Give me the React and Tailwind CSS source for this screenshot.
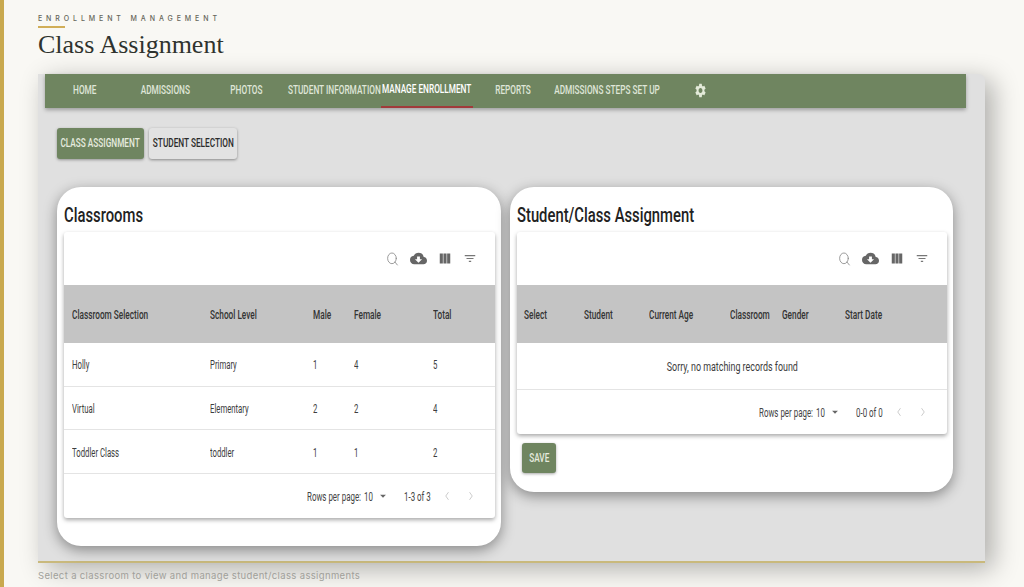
import React from "react";
import { MdCloudDownload, MdViewColumn, MdFilterList, MdSettings, MdArrowDropDown } from "react-icons/md";
import { Search, ChevronLeft, ChevronRight } from "lucide-react";

const roboto = "font-['Roboto',sans-serif]";
const navText = "inline-block whitespace-nowrap text-[12.5px] font-medium scale-x-[0.66]";
const headText = "inline-block whitespace-nowrap origin-left text-[12.5px] font-medium text-[#333] scale-x-[0.66]";
const cellText = "inline-block whitespace-nowrap origin-left text-[12.5px] text-[#3d3d3d] scale-x-[0.62]";
const footText = "inline-block whitespace-nowrap origin-left text-[12px] text-[#444] scale-x-[0.66]";

function Toolbar() {
  return (
    <div className="h-[53px] flex items-center justify-end pr-[18px] gap-[11px] pt-[0px]">
      <Search width={13} height={16} strokeWidth={1.4} color="#8a8a8a" preserveAspectRatio="none" />
      <MdCloudDownload size={17} color="#666" preserveAspectRatio="none" />
      <MdViewColumn size={15} color="#666" preserveAspectRatio="none" className="w-[14px] h-[17px]" />
      <MdFilterList size={15} color="#777" className="w-[14px] h-[15px] ml-[0px]" />
    </div>
  );
}

function Pager({ range }) {
  return (
    <div className="h-[44px] flex items-center justify-end pr-[19px]">
      <span className="w-[57px]"><span className={footText}>Rows per page:</span></span>
      <span className="w-[12px]"><span className={footText}>10</span></span>
      <MdArrowDropDown size={14} color="#666" className="mr-[14px]" />
      <span className="w-[38px]"><span className={footText}>{range}</span></span>
      <ChevronLeft width={10} height={14} strokeWidth={1.2} color="#aaa" preserveAspectRatio="none" />
      <ChevronRight width={10} height={14} strokeWidth={1.2} color="#aaa" preserveAspectRatio="none" className="ml-[14px]" />
    </div>
  );
}

const classrooms = [
  ["Holly", "Primary", "1", "4", "5"],
  ["Virtual", "Elementary", "2", "2", "4"],
  ["Toddler Class", "toddler", "1", "1", "2"],
];

const tabs = [
  ["HOME", "w-[80px]"],
  ["ADMISSIONS", "w-[80px]"],
  ["PHOTOS", "w-[82px]"],
  ["STUDENT INFORMATION", "w-[94px]"],
];

export default function App() {
  return (
    <div className={`h-[587px] overflow-hidden bg-[#f9f8f4] border-l-4 border-[#c9a94f] pl-[34px] flex flex-col ${roboto}`}>
      <header className="h-[74px] pt-[15px]">
        <p className="font-['Inter',sans-serif] text-[7px] leading-[8px] tracking-[3.9px] font-medium text-[#66665a] whitespace-nowrap">ENROLLMENT MANAGEMENT</p>
        <div className="w-[27px] h-[2px] bg-[#d1ae58] mt-[3px]"></div>
        <h1 className="font-['Liberation_Serif',serif] text-[26px] leading-[30px] text-[#2f332e] mt-[2px] whitespace-nowrap">Class Assignment</h1>
      </header>

      <main className="w-[947px] h-[489px] shrink-0 bg-[#e0e0e0] rounded-tr-[6px] border-b-2 border-[#c9b97c] shadow-[8px_6px_26px_rgba(0,0,0,0.3)] pl-[7px]">
        <nav className="w-[921px] h-[34px] bg-[#6f8560] flex shadow-[0_2px_4px_rgba(0,0,0,0.3)] text-[#dfe6d8]">
          {tabs.map(([t, w]) => (
            <div key={t} className={`${w} flex items-center justify-center pb-[2px]`}><span className={navText}>{t}</span></div>
          ))}
          <div className="w-[92px] flex items-center justify-center pb-[2px] border-b-2 border-[#a13a3a] text-white"><span className={navText}>MANAGE ENROLLMENT</span></div>
          <div className="w-[80px] flex items-center justify-center pb-[2px]"><span className={navText}>REPORTS</span></div>
          <div className="w-[108px] flex items-center justify-center pb-[2px]"><span className={navText}>ADMISSIONS STEPS SET UP</span></div>
          <div className="w-[78px] flex items-center justify-center pb-[2px]"><MdSettings color="#e3ead9" className="w-[13px] h-[17px]" preserveAspectRatio="none" /></div>
        </nav>

        <div className="flex ml-[12px] mt-[20px] gap-[5px]">
          <button className="w-[87px] h-[31px] bg-[#6f8560] text-[#e6ebdf] rounded-[3px] shadow-[0_1px_3px_rgba(0,0,0,0.35)] flex items-center justify-center"><span className={navText}>CLASS ASSIGNMENT</span></button>
          <button className="w-[88px] h-[31px] bg-[#e2e2e2] text-[#2b2b2b] rounded-[3px] shadow-[0_1px_3px_rgba(0,0,0,0.4)] flex items-center justify-center"><span className={navText}>STUDENT SELECTION</span></button>
        </div>

        <div className="flex items-start ml-[12px] mt-[28px] gap-[9px]">
          <section className="w-[444px] h-[359px] bg-white rounded-[24px] shadow-[0_4px_14px_rgba(0,0,0,0.4)] pl-[7px] pr-[6px]">
            <h2 className="h-[45px] pt-[15px] text-[20px] leading-[26px] font-medium text-[#222] whitespace-nowrap"><span className="inline-block origin-left scale-x-[0.74]">Classrooms</span></h2>
            <div className="bg-white rounded-[3px] shadow-[0_2px_4px_rgba(0,0,0,0.35)]">
              <Toolbar />
              <div className="h-[58px] bg-[#c4c4c4] grid grid-cols-[138px_103px_41px_79px_1fr] items-center pl-[8px]">
                {["Classroom Selection", "School Level", "Male", "Female", "Total"].map((t) => <div key={t}><span className={headText}>{t}</span></div>)}
              </div>
              {classrooms.map((r) => (
                <div key={r[0]} className="h-[43.67px] grid grid-cols-[138px_103px_41px_79px_1fr] items-center pl-[8px] border-b border-[#e4e4e4]">
                  {r.map((c, i) => <div key={i}><span className={cellText}>{c}</span></div>)}
                </div>
              ))}
              <Pager range="1-3 of 3" />
            </div>
          </section>

          <section className="w-[443px] h-[305px] bg-white rounded-[24px] shadow-[0_4px_14px_rgba(0,0,0,0.4)] pl-[7px] pr-[6px]">
            <h2 className="h-[45px] pt-[15px] text-[20px] leading-[26px] font-medium text-[#222] whitespace-nowrap"><span className="inline-block origin-left scale-x-[0.74]">Student/Class Assignment</span></h2>
            <div className="bg-white rounded-[3px] shadow-[0_2px_4px_rgba(0,0,0,0.35)]">
              <Toolbar />
              <div className="h-[58px] bg-[#c4c4c4] grid grid-cols-[60px_65px_81px_52px_63px_1fr] items-center pl-[7px]">
                {["Select", "Student", "Current Age", "Classroom", "Gender", "Start Date"].map((t) => <div key={t}><span className={headText}>{t}</span></div>)}
              </div>
              <div className="h-[47px] flex items-center justify-center border-b border-[#e4e4e4]">
                <span className="inline-block whitespace-nowrap text-[13.5px] text-[#3d3d3d] scale-x-[0.66]">Sorry, no matching records found</span>
              </div>
              <Pager range="0-0 of 0" />
            </div>
            <button className="ml-[5px] mt-[9px] w-[34px] h-[30px] bg-[#6f8560] text-[#e6ebdf] rounded-[3px] shadow-[0_1px_3px_rgba(0,0,0,0.35)] flex items-center justify-center"><span className={navText}>SAVE</span></button>
          </section>
        </div>
      </main>

      <footer className="pt-[7px] font-['Inter',sans-serif] text-[9.5px] leading-[12px] tracking-[0.35px] text-[#a0a09a] whitespace-nowrap">Select a classroom to view and manage student/class assignments</footer>
    </div>
  );
}
